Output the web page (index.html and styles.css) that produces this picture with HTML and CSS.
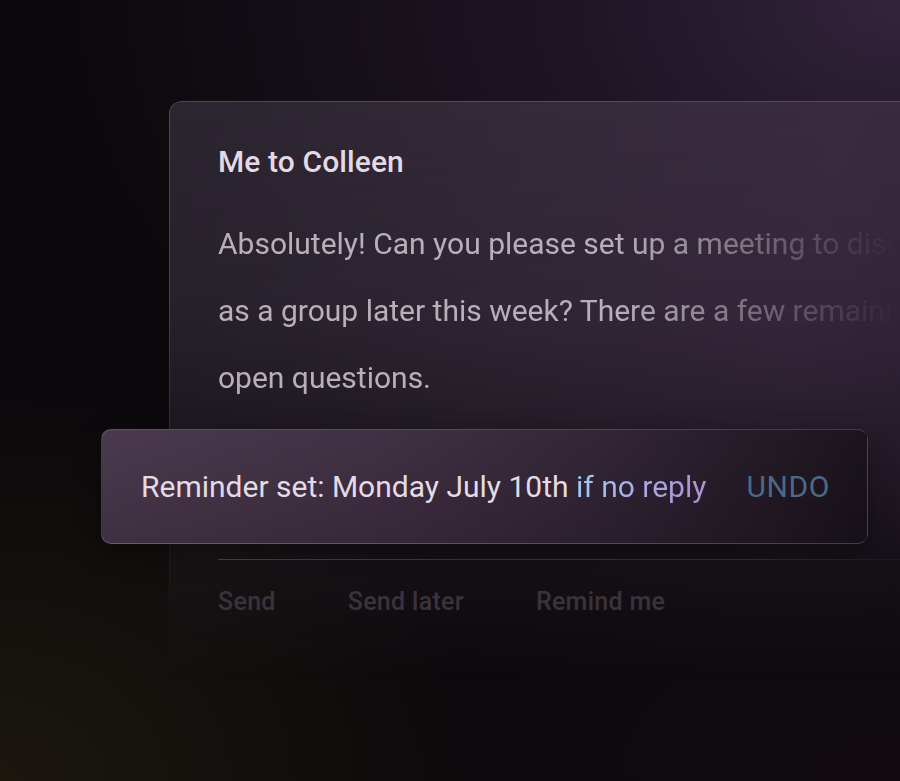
FILE: index.html
```html
<!DOCTYPE html>
<html lang="en">
<head>
<meta charset="utf-8">
<title>Reminder</title>
<link rel="stylesheet" href="styles.css">
</head>
<body>
<div class="stage">
  <div class="card">
    <h2 class="title">Me to Colleen</h2>
    <p class="message">Absolutely! Can you please set up a meeting to discuss as a group later this week? There are a few remaining open questions.</p>
    <div class="actions">
      <span class="action">Send</span>
      <span class="action">Send later</span>
      <span class="action">Remind me</span>
    </div>
  </div>
  <div class="toast">
    <span class="toast-text">Reminder set: Monday July 10th <span class="cond">if no reply</span></span>
    <span class="undo">UNDO</span>
  </div>
</div>
</body>
</html>
```

FILE: styles.css
```css
* { box-sizing: border-box; }
html, body {
  margin: 0;
  width: 900px;
  height: 781px;
  overflow: hidden;
}
body {
  font-family: "Roboto", "Inter", sans-serif;
  background:
    radial-gradient(ellipse 820px 560px at 100% 0%, rgba(50, 36, 60, 1) 0%, rgba(38, 26, 46, 0.7) 40%, rgba(20, 12, 24, 0) 100%),
    radial-gradient(ellipse 480px 380px at 0% 100%, rgba(32, 27, 15, 0.75), rgba(0,0,0,0) 100%),
    radial-gradient(ellipse 500px 300px at 100% 100%, rgba(20, 12, 20, 0.6), rgba(0,0,0,0) 100%),
    #0c090c;
}
.stage {
  position: relative;
  width: 900px;
  height: 781px;
  padding: 101px 0 0 169px;
}
.card {
  position: relative;
  width: 800px;
  height: 580px;
  padding: 43px 0 0 49px;
}
.card::before {
  content: "";
  position: absolute;
  inset: 0;
  border: 1px solid rgba(210, 190, 220, 0.2);
  border-right: none;
  border-radius: 12px 0 0 12px;
  background:
    linear-gradient(100deg, #2b2530 0%, #342a39 40%, #3a2b40 75%, #33253a 100%);
  -webkit-mask-image: linear-gradient(180deg, #000 0%, rgba(0,0,0,0.85) 35%, rgba(0,0,0,0.35) 70%, rgba(0,0,0,0.12) 88%, rgba(0,0,0,0) 100%);
  mask-image: linear-gradient(180deg, #000 0%, rgba(0,0,0,0.85) 35%, rgba(0,0,0,0.35) 70%, rgba(0,0,0,0.12) 88%, rgba(0,0,0,0) 100%);
  z-index: 0;
}
.title, .message, .actions { position: relative; z-index: 1; }
.title {
  margin: 0;
  font-size: 30px;
  line-height: 36px;
  font-weight: 500;
  color: #e3dae3;
  letter-spacing: 0.1px;
}
.message {
  margin: 30px 0 0;
  width: 760px;
  font-size: 30px;
  line-height: 67px;
  color: #b9aeba;
  -webkit-mask-image: linear-gradient(90deg, #000 0px, #000 400px, rgba(0,0,0,0.5) 540px, rgba(0,0,0,0.15) 630px, rgba(0,0,0,0) 680px);
  mask-image: linear-gradient(90deg, #000 0px, #000 400px, rgba(0,0,0,0.5) 540px, rgba(0,0,0,0.15) 630px, rgba(0,0,0,0) 680px);
}
.toast {
  position: absolute;
  left: 101px;
  top: 429px;
  width: 767px;
  height: 115px;
  border: 1px solid rgba(220, 200, 225, 0.22);
  border-right-color: rgba(220, 200, 225, 0.08);
  border-radius: 10px;
  background:
    linear-gradient(180deg, rgba(0,0,0,0) 0%, rgba(10,5,10,0.18) 100%),
    linear-gradient(100deg, #4b3a4e 0%, #413144 35%, #322536 65%, #221924 88%, #19121b 100%);
  display: flex;
  align-items: center;
  padding-left: 39px;
  gap: 40px;
  font-size: 30px;
  box-shadow: 0 8px 24px rgba(0,0,0,0.35);
}
.toast-text { color: #e4dbe4; }
.cond {
  background: linear-gradient(90deg, #9ccbf3 0%, #a9a9e6 50%, #b08fd4 100%);
  -webkit-background-clip: text;
  background-clip: text;
  color: transparent;
}
.undo {
  color: #4d6885;
  letter-spacing: 0.6px;
}
.actions {
  margin: 148px 0 0;
  width: 720px;
  padding-top: 28px;
  display: flex;
  gap: 72px;
}
.actions::before {
  content: "";
  position: absolute;
  left: 0;
  top: 0;
  width: 720px;
  height: 1px;
  background: linear-gradient(90deg, rgba(120, 105, 125, 0.45), rgba(120, 105, 125, 0.3) 70%, rgba(120,105,125,0.05));
}
.action {
  font-size: 25px;
  line-height: 29px;
  font-weight: 500;
  letter-spacing: 0.3px;
  color: #39333a;
}
```
